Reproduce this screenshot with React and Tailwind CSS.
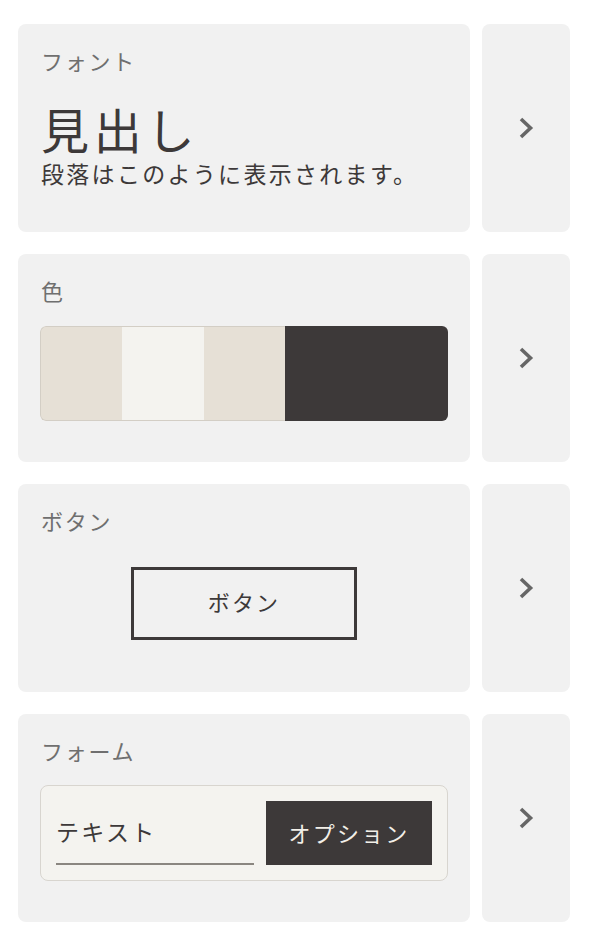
import React from 'react';

const font = { fontFamily: '"Noto Sans CJK JP", "Noto Sans", sans-serif' };

const Chevron = () => (
  <svg width="16" height="22" viewBox="0 0 16 22" fill="none">
    <polyline points="3,2 12.5,11 3,20" stroke="#666666" strokeWidth="3.6" strokeLinejoin="miter" />
  </svg>
);

const Row = ({ label, children }) => (
  <div className="flex gap-3">
    <div className="flex-1 h-[208px] rounded-lg bg-[#f1f1f1] px-[23px] pt-[25px]">
      <div className="text-[22px] leading-none tracking-[0.08em] text-[#6f6f6f]">{label}</div>
      {children}
    </div>
    <div className="w-[88px] h-[208px] rounded-lg bg-[#f1f1f1] flex items-center justify-center">
      <Chevron />
    </div>
  </div>
);

export default function App() {
  return (
    <div className="bg-white min-h-screen pl-[18px] pr-[24px] pt-[24px] pb-[30px]" style={font}>
      <div className="flex flex-col gap-[22px]">
        <Row label="フォント">
          <div className="mt-[33px] text-[48px] leading-none tracking-[0.1em] text-[#3d3939]">見出し</div>
          <div className="mt-[10px] text-[23px] leading-none tracking-[0.1em] text-[#3d3939]">
            段落はこのように表示されます。
          </div>
        </Row>

        <Row label="色">
          <div className="mt-[25px] flex h-[95px] -mx-[1px] rounded-md overflow-hidden">
            <div className="flex-1 bg-[#e6e0d6] border-y border-l border-[#d3cec5] rounded-l-md" />
            <div className="flex-1 bg-[#f4f3ef] border-y border-[#d3cec5]" />
            <div className="flex-1 bg-[#e6e0d6] border-y border-[#d3cec5]" />
            <div className="flex-[2] bg-[#3d3939]" />
          </div>
        </Row>

        <Row label="ボタン">
          <div className="mt-[36px] flex justify-center">
            <button
              className="w-[226px] h-[73px] pb-[6px] border-[3.5px] border-[#3d3939] text-[22px] leading-none tracking-[0.1em] text-[#3d3939] flex items-center justify-center"
              style={font}
            >
              ボタン
            </button>
          </div>
        </Row>

        <Row label="フォーム">
          <div className="mt-[24px] -mx-[1px] flex gap-3 rounded-lg border border-[#d8d5cf] bg-[#f4f3ef] p-[15px]">
            <div className="flex-1 h-[64px] pb-[2px] flex items-center border-b-[2.5px] border-[#8a8680] text-[23px] leading-none tracking-[0.1em] text-[#3d3939]">
              テキスト
            </div>
            <div className="w-[166px] h-[64px] pb-[2px] bg-[#3d3939] flex items-center justify-center text-[22px] leading-none tracking-[0.1em] text-[#f2efe8]">
              オプション
            </div>
          </div>
        </Row>
      </div>
    </div>
  );
}
